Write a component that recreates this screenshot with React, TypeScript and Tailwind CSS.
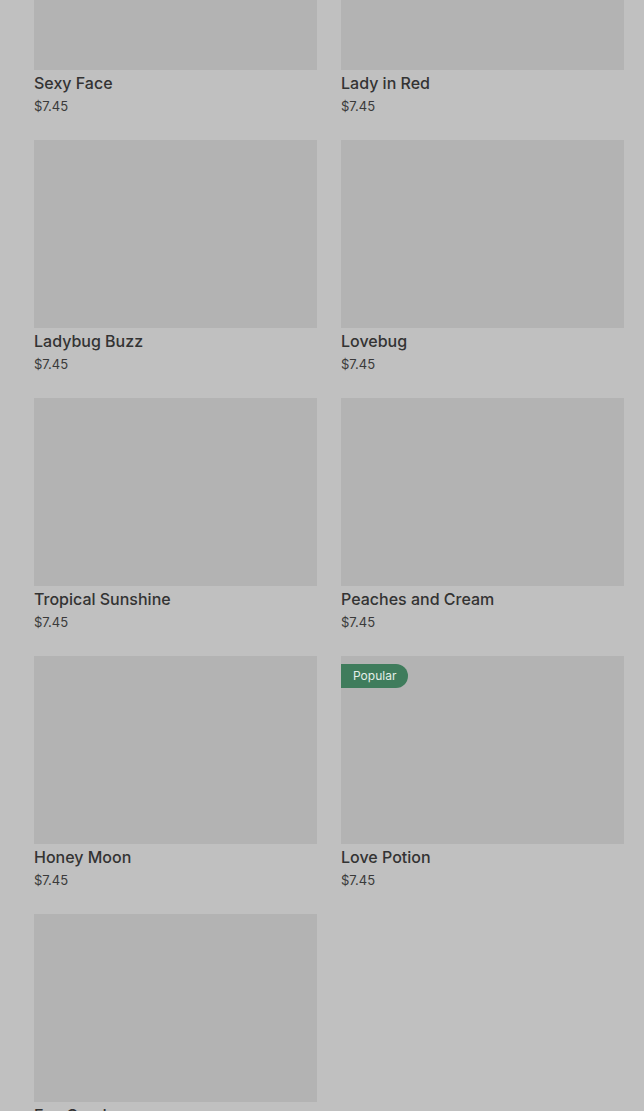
import React from 'react';

const products = [
  { name: 'Sexy Face', price: '$7.45' },
  { name: 'Lady in Red', price: '$7.45' },
  { name: 'Ladybug Buzz', price: '$7.45' },
  { name: 'Lovebug', price: '$7.45' },
  { name: 'Tropical Sunshine', price: '$7.45' },
  { name: 'Peaches and Cream', price: '$7.45' },
  { name: 'Honey Moon', price: '$7.45' },
  { name: 'Love Potion', price: '$7.45', badge: 'Popular' },
  { name: 'Eye Candy', price: '$7.45' },
];

export default function App() {
  return (
    <div className="w-[644px] h-[1111px] overflow-hidden bg-[#c0c0c0] font-['Inter',sans-serif] text-[#333333]">
      <div className="grid grid-cols-2 gap-x-6 gap-y-6 pl-[34px] pr-[20px] mt-[-118px]">
        {products.map((p, i) => (
          <div key={i} className="flex flex-col">
            <div className="relative h-[188px] bg-[#b3b3b3]">
              {p.badge && (
                <span className="absolute left-0 top-2 h-6 px-3 flex items-center rounded-r-full bg-[#3f7c5c] text-[12px] text-[#e4efe8]">
                  {p.badge}
                </span>
              )}
            </div>
            <span className="mt-[1px] text-[16px] leading-6 font-medium">{p.name}</span>
            <span className="mt-[1px] text-[13px] leading-5 text-[#3a3a3a]">{p.price}</span>
          </div>
        ))}
      </div>
    </div>
  );
}
